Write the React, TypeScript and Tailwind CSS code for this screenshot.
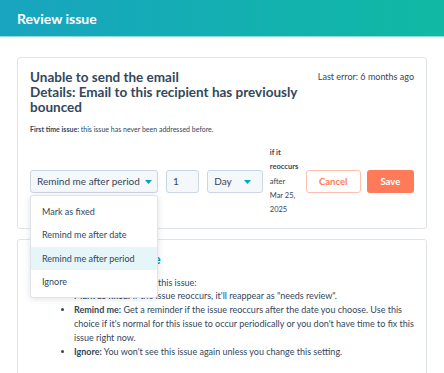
import React from 'react';

const Caret = () => (
  <svg width="7" height="4" viewBox="0 0 7 4" className="shrink-0">
    <path d="M0 0 H7 L3.5 4 Z" fill="#00a4bd" />
  </svg>
);

const menuItems = ['Mark as fixed', 'Remind me after date', 'Remind me after period', 'Ignore'];

const App: React.FC = () => {
  return (
    <div className="w-[444px] min-h-[373px] bg-white font-['Lato',sans-serif] text-[#33475b]">
      {/* Header */}
      <div className="h-[37px] px-[17px] flex items-center bg-gradient-to-r from-[#19a4c0] to-[#11b9a3] border-b border-[#8fdcdc]">
        <h1 className="text-[14px] font-bold text-white">Review issue</h1>
      </div>

      <div className="px-[17px] pt-[20px]">
        {/* Issue card */}
        <div className="border border-[#dfe3eb] rounded-[3px] px-3 pt-3 pb-[11px]">
          <div className="flex justify-between">
            <h2 className="w-[280px] text-[13.5px] leading-[15px] font-bold">
              Unable to send the email
              <br />
              Details: Email to this recipient has previously bounced
            </h2>
            <span className="text-[9px] leading-[15px] mt-[-1px]">Last error: 6 months ago</span>
          </div>
          <p className="mt-[9px] text-[7px] leading-[10px]">
            <span className="font-bold">First time issue:</span> this issue has never been addressed before.
          </p>

          <div className="mt-[12px] flex items-center">
            <div className="relative">
              <button className="w-[128px] h-[23px] px-[6px] flex items-center gap-[5px] whitespace-nowrap bg-[#f5f8fa] border border-[#cbd6e2] rounded-[3px] text-[10px]">
                Remind me after period
                <Caret />
              </button>
              <div className="absolute left-0 top-full mt-[2px] w-[128px] py-[4px] bg-white border border-[#dfe3eb] rounded-[3px] shadow-[0_1px_6px_rgba(45,62,80,0.15)] z-10">
                {menuItems.map((item) => (
                  <div
                    key={item}
                    className={`h-[23.3px] px-[11px] flex items-center whitespace-nowrap text-[9px] ${
                      item === 'Remind me after period' ? 'bg-[#e5f5f8]' : ''
                    }`}
                  >
                    {item}
                  </div>
                ))}
              </div>
            </div>
            <div className="ml-[8px] w-[34px] h-[23px] px-[6px] flex items-center bg-[#f5f8fa] border border-[#cbd6e2] rounded-[3px] text-[10px]">
              1
            </div>
            <button className="ml-[8px] w-[57px] h-[23px] px-[6px] flex items-center justify-between bg-[#f5f8fa] border border-[#cbd6e2] rounded-[3px] text-[10px]">
              Day
              <span className="mr-[5px]">
                <Caret />
              </span>
            </button>
            <div className="ml-[7px] w-[32px] text-[7.5px] leading-[14.3px]">
              <span className="font-bold">
                if it
                <br />
                reoccurs
              </span>
              <br />
              after
              <br />
              Mar 25,
              <br />
              2025
            </div>
            <button className="ml-[5px] w-[57px] h-[23px] border border-[#ffbfae] rounded-[3px] text-[9.5px] font-bold text-[#ff7a59] bg-white">
              Cancel
            </button>
            <button className="ml-[6px] w-[49px] h-[23px] rounded-[3px] bg-[#ff7a59] text-[9.5px] font-bold text-white">
              Save
            </button>
          </div>
        </div>

        {/* Explanation card */}
        <div className="mt-[10px] border border-[#dfe3eb] rounded-[3px] px-3 pt-[10px] pb-4">
          <h3 className="text-[14px] leading-[18px] font-bold text-[#0091ae]">Ways to fix this issue</h3>
          <p className="mt-[8px] text-[9px] leading-[13px]">There are three ways to address this issue:</p>
          <ul className="list-disc pl-[44px] text-[9px] leading-[14px]">
            <li>
              <span className="font-bold">Mark as fixed:</span> If the issue reoccurs, it'll reappear as "needs review".
            </li>
            <li>
              <span className="font-bold">Remind me:</span> Get a reminder if the issue reoccurs after the date you choose. Use this choice if it's normal for this issue to occur periodically or you don't have time to fix this issue right now.
            </li>
            <li>
              <span className="font-bold">Ignore:</span> You won't see this issue again unless you change this setting.
            </li>
          </ul>
        </div>
      </div>
    </div>
  );
};

export default App;
